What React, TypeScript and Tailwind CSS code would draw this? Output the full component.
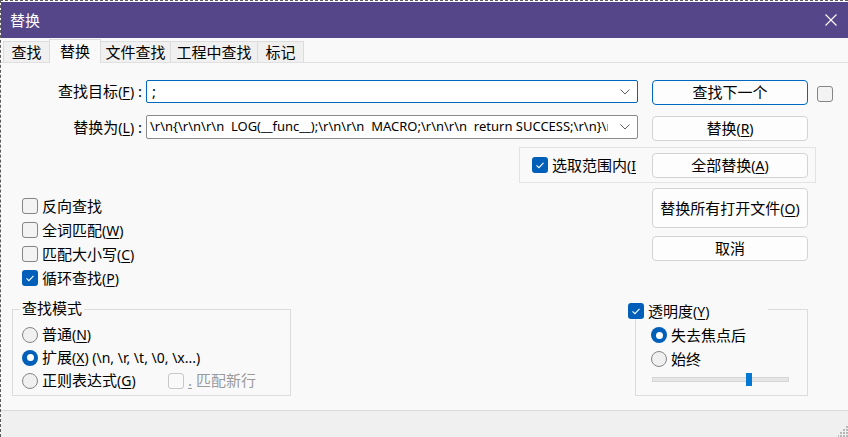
import type { ReactNode } from "react";

const FONT = "font-['Segoe_UI','Noto_Sans','Noto_Sans_CJK_SC',sans-serif]";

function Mn({ k, disabled }: { k: string; disabled?: boolean }) {
  return (
    <span className={`text-[14px] ${disabled ? "text-[#a0a0a0]" : ""}`}>
      (<span className="underline underline-offset-2">{k}</span>)
    </span>
  );
}

function Check({ checked, disabled }: { checked?: boolean; disabled?: boolean }) {
  if (checked) {
    return (
      <span className="w-4 h-4 shrink-0 rounded-[3px] bg-[#005fb8] flex items-center justify-center">
        <svg viewBox="0 0 16 16" className="w-4 h-4">
          <path d="M4.5 8.3l2.4 2.3 4.6-4.8" stroke="white" strokeWidth="1.1" fill="none" />
        </svg>
      </span>
    );
  }
  return (
    <span
      className={`block w-4 h-4 shrink-0 rounded-[3px] border ${
        disabled ? "border-[#c8c8c8] bg-[#f9f9f9]" : "border-[#858585] bg-[#f3f3f3]"
      }`}
    />
  );
}

function Radio({ checked }: { checked?: boolean }) {
  if (checked) {
    return (
      <span className="w-4 h-4 shrink-0 rounded-full bg-[#005fb8] flex items-center justify-center">
        <span className="w-[7px] h-[7px] rounded-full bg-white" />
      </span>
    );
  }
  return <span className="block w-4 h-4 shrink-0 rounded-full border border-[#858585] bg-[#f0f0f0]" />;
}

function Btn({ children, primary, h = "h-[25px]" }: { children: ReactNode; primary?: boolean; h?: string }) {
  return (
    <button
      type="button"
      className={`w-[156px] ${h} rounded-[4px] border bg-[#fdfdfd] flex items-center justify-center ${
        primary ? "border-[#0067c0]" : "border-[#d3d3d3]"
      }`}
    >
      {children}
    </button>
  );
}

function Chevron() {
  return (
    <svg viewBox="0 0 10 6" className="w-[10px] h-[6px] shrink-0">
      <path d="M0.5 0.5L5 5l4.5-4.5" stroke="#606060" strokeWidth="1" fill="none" />
    </svg>
  );
}

const tabs = [
  { label: "查找", w: "w-[47px]" },
  { label: "替换", w: "w-[52px]", active: true },
  { label: "文件查找", w: "w-[71px]" },
  { label: "工程中查找", w: "w-[88px]" },
  { label: "标记", w: "w-[47px]" },
];

export default function App() {
  return (
    <div
      className={`w-[848px] h-[437px] overflow-hidden bg-[#f9f9f9] border-t border-l border-dashed border-[#5a5a5a] flex flex-col text-[15px] text-black ${FONT}`}
    >
      {/* title bar */}
      <div className="mt-px h-[36px] shrink-0 bg-[#544689] flex items-center justify-between pl-[9px] pr-[11px]">
        <span className="text-white text-[15px]">替换</span>
        <svg viewBox="0 0 12 12" className="w-3 h-3">
          <path d="M0.5 0.5l11 11M11.5 0.5l-11 11" stroke="white" strokeWidth="1.1" />
        </svg>
      </div>

      {/* tabs */}
      <div className="h-[25px] shrink-0 flex items-end pl-[2px] border-b border-[#e0e0e0]">
        {tabs.map((t) => (
          <div
            key={t.label}
            className={`${t.w} -ml-px first:ml-0 flex items-center justify-center border-t border-l border-r border-[#dcdcdc] ${
              t.active ? "h-[24px] -mb-px bg-[#f9f9f9] relative z-10" : "h-[21px] bg-[#f0f0f0]"
            }`}
          >
            {t.label}
          </div>
        ))}
      </div>

      {/* content */}
      <div className="flex-1 flex flex-col pt-[17px]">
        {/* find row */}
        <div className="flex items-start h-[25px]">
          <div className="w-[145px] h-[23px] pr-[4px] flex items-center justify-end whitespace-nowrap">
            查找目标<Mn k="F" />&nbsp;:
          </div>
          <div className="w-[492px] h-[23px] border border-[#0067c0] rounded-[2px] bg-white flex items-center pl-[5px] pr-[7px]">
            <span className="flex-1">;</span>
            <Chevron />
          </div>
          <div className="ml-[14px]">
            <Btn primary>查找下一个</Btn>
          </div>
          <div className="ml-[9px] mt-[6px] flex">
            <Check />
          </div>
        </div>

        {/* replace row */}
        <div className="flex items-start mt-[10px] h-[26px]">
          <div className="w-[145px] h-[24px] pr-[4px] flex items-center justify-end whitespace-nowrap">
            替换为<Mn k="L" />&nbsp;:
          </div>
          <div className="w-[492px] h-[24px] border border-[#8a8a8a] rounded-[2px] bg-white flex items-center pl-[3px] pr-[7px]">
            <span className="flex-1 overflow-hidden whitespace-pre text-[13px] mr-[12px]">
              {"\\r\\n{\\r\\n\\r\\n  LOG(__func__);\\r\\n\\r\\n  MACRO;\\r\\n\\r\\n  return SUCCESS;\\r\\n}\\r\\n\\r\\n"}
            </span>
            <Chevron />
          </div>
          <div className="ml-[14px] mt-px">
            <Btn>
              替换<Mn k="R" />
            </Btn>
          </div>
        </div>

        {/* in selection */}
        <div className="mt-[6px] ml-[518px] w-[297px] h-[36px] border border-[#e3e3e3] flex items-center">
          <div className="w-[116px] pl-[12px] flex items-center gap-[4px] overflow-hidden whitespace-nowrap">
            <Check checked />
            <span>
              选取范围内<span className="text-[14px]">(<span className="underline underline-offset-2">I</span>)</span>
            </span>
          </div>
          <div className="ml-[16px]">
            <Btn>
              全部替换<Mn k="A" />
            </Btn>
          </div>
        </div>

        {/* options + buttons */}
        <div className="mt-[5px] h-[113px] flex">
          <div className="ml-[21px] w-[630px] pt-[6px] flex flex-col">
            {[
              { t: "反向查找" },
              { t: "全词匹配", k: "W" },
              { t: "匹配大小写", k: "C" },
              { t: "循环查找", k: "P", checked: true },
            ].map((o) => (
              <div key={o.t} className="h-[24px] flex items-center gap-[4px]">
                <Check checked={o.checked} />
                <span>
                  {o.t}
                  {o.k && <Mn k={o.k} />}
                </span>
              </div>
            ))}
          </div>
          <div className="flex flex-col gap-[8px]">
            <Btn h="h-[40px]">
              替换所有打开文件<Mn k="O" />
            </Btn>
            <Btn>取消</Btn>
          </div>
        </div>

        {/* bottom groups */}
        <div className="mt-[8px] flex">
          <div className="relative ml-[11px] w-[279px] h-[87px] border border-[#dcdcdc] pl-[9px] pt-[13px]">
            <div className="absolute left-[7px] -top-[12px] px-[2px] bg-[#f9f9f9] leading-[20px]">查找模式</div>
            <div className="h-[23px] flex items-center gap-[4px]">
              <Radio />
              <span>
                普通<Mn k="N" />
              </span>
            </div>
            <div className="h-[23px] flex items-center gap-[4px]">
              <Radio checked />
              <span>
                扩展<Mn k="X" />
                <span className="text-[14px]"> (\n, \r, \t, \0, \x...)</span>
              </span>
            </div>
            <div className="h-[23px] flex items-center gap-[4px]">
              <Radio />
              <span className="w-[122px]">
                正则表达式<Mn k="G" />
              </span>
              <Check disabled />
              <span className="text-[#9a9a9a]">
                <span className="underline underline-offset-2">.</span> 匹配新行
              </span>
            </div>
          </div>

          <div className="relative ml-[344px] w-[173px] h-[87px] border border-[#dcdcdc] pl-[15px] pt-[13px]">
            <div className="absolute -left-[8px] -top-[7px] w-[140px] h-[16px] bg-[#f9f9f9] flex items-center gap-[4px]">
              <Check checked />
              <span>
                透明度<Mn k="Y" />
              </span>
            </div>
            <div className="h-[24px] flex items-center gap-[4px]">
              <Radio checked />
              <span>失去焦点后</span>
            </div>
            <div className="h-[24px] flex items-center gap-[4px]">
              <Radio />
              <span>始终</span>
            </div>
            <div className="relative mt-[6px] ml-px w-[137px] h-[5px] bg-[#e6e6e6] border border-[#d6d6d6]">
              <div className="absolute left-[93px] -top-[5px] w-[6px] h-[13px] bg-[#0078d4]" />
            </div>
          </div>
        </div>
      </div>

      {/* bottom strip */}
      <div className="h-[27px] shrink-0 bg-[#f0f0f0] border-t border-[#dadada] flex items-end justify-end">
        <svg viewBox="0 0 10 11" className="w-[10px] h-[11px]">
          {[
            [7, 0],
            [4, 3],
            [7, 3],
            [1, 6],
            [4, 6],
            [7, 6],
            [-2, 9],
            [1, 9],
            [4, 9],
            [7, 9],
          ].map(([x, y]) => (
            <rect key={`${x}-${y}`} x={x + 1} y={y} width="2" height="2" fill="#b8b8b8" />
          ))}
        </svg>
      </div>
    </div>
  );
}
